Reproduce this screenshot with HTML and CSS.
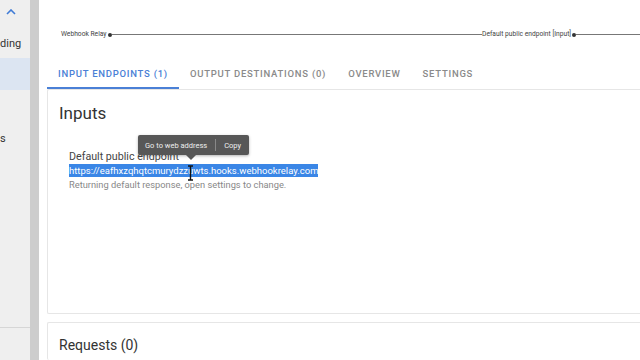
FILE: index.html
```html
<!DOCTYPE html>
<html lang="en">
<head>
    <meta charset="UTF-8">
    <meta name="viewport" content="width=device-width, initial-scale=1.0">
    <title>Webhook Relay - Bucket</title>
    <link rel="stylesheet" href="styles.css">
</head>
<body>
    <div class="sidebar">
        <div class="sideTop">
            <svg class="chevron" width="10" height="6" viewBox="0 0 10 6">
                <path d="M1 5 L5 1 L9 5" fill="none" stroke="#3f7bd6" stroke-width="1.6"/>
            </svg>
        </div>
        <div class="sideItem">ding</div>
        <div class="sideItem active"></div>
        <div class="sideItem low">s</div>
        <div class="sideBottom"></div>
    </div>
    <div class="scrollbar"></div>

    <div class="main">
        <div class="graph">
            <div class="graphLine"></div>
            <div class="node nodeLeft">Webhook Relay <span class="dot"></span></div>
            <div class="node nodeRight">Default public endpoint [Input] <span class="dot"></span></div>
        </div>

        <div class="tabs">
            <div class="tab active">Input endpoints (1)</div>
            <div class="tab">Output destinations (0)</div>
            <div class="tab">Overview</div>
            <div class="tab">Settings</div>
        </div>

        <div class="card inputs">
            <h3>Inputs</h3>
            <div class="endpoint">
                <div class="endpointName">Default public endpoint</div>
                <div class="endpointUrl"><span class="selected">https://eafhxzqhqtcmurydzzuwts.hooks.webhookrelay.com</span></div>
                <div class="endpointNote">Returning default response, open settings to change.</div>

                <div class="popup">
                    <span>Go to web address</span>
                    <span class="sep"></span>
                    <span>Copy</span>
                </div>
                <svg class="cursor" width="7" height="16" viewBox="0 0 7 16">
                    <path d="M1 1 H6 M3.5 1 V15 M1 15 H6" fill="none" stroke="#111" stroke-width="1.4"/>
                </svg>
            </div>
        </div>

        <div class="card requests">
            <h3>Requests (0)</h3>
        </div>
    </div>
</body>
</html>
```

FILE: styles.css
```css
body {
    font-family: Roboto, "Noto Sans", Arial, sans-serif;
    margin: 0;
    width: 640px;
    height: 360px;
    overflow: hidden;
    display: flex;
    background-color: #fff;
}

.sidebar {
    width: 30px;
    flex-shrink: 0;
    background-color: #efefef;
    overflow: hidden;
    display: flex;
    flex-direction: column;
}
.sideTop {
    height: 24px;
    display: flex;
    align-items: center;
    padding-left: 6px;
}
.sideItem {
    height: 34px;
    line-height: 40px;
    font-size: 11px;
    color: #333;
    white-space: nowrap;
}
.sideItem.active {
    height: 32px;
    background-color: #dce5f2;
}
.sideItem.low {
    margin-top: 34px;
    height: 30px;
    line-height: 30px;
}
.sideBottom {
    margin-top: auto;
    height: 32px;
    border-top: 1px solid #d6d6d6;
}

.scrollbar {
    width: 9px;
    flex-shrink: 0;
    background-color: #cdcdcd;
}

.main {
    width: 600px;
    flex-shrink: 0;
    padding-left: 8px;
}

.graph {
    height: 60px;
    position: relative;
}
.graphLine {
    position: absolute;
    left: 64px;
    right: 0;
    top: 34px;
    height: 1px;
    background-color: #777;
}
.node {
    position: absolute;
    top: 30px;
    font-size: 6.7px;
    color: #444;
    background-color: #fff;
    display: flex;
    align-items: center;
    gap: 1px;
    white-space: nowrap;
    line-height: 9px;
}
.nodeLeft {
    left: 14px;
}
.nodeRight {
    left: 435px;
}
.dot {
    width: 4px;
    height: 4px;
    border-radius: 50%;
    background-color: #333;
}

.tabs {
    display: flex;
    height: 29px;
}
.tab {
    padding: 0 11px;
    font-size: 9.5px;
    font-weight: 500;
    letter-spacing: 0.75px;
    text-transform: uppercase;
    color: #8a8a8a;
    display: flex;
    align-items: center;
    box-sizing: border-box;
    border-bottom: 2px solid transparent;
}
.tab.active {
    color: #4a80d6;
    border-bottom-color: #4a80d6;
}

.card {
    border: 1px solid #e6e6e6;
    border-right: none;
    border-radius: 2px 0 0 2px;
    background-color: #fff;
}
.card h3 {
    margin: 0;
    font-weight: 400;
    color: #333;
}
.inputs {
    height: 223px;
    padding-left: 11px;
}
.inputs h3 {
    font-size: 17px;
    padding-top: 13px;
    line-height: 20px;
}
.endpoint {
    position: relative;
    padding-left: 10px;
    padding-top: 27px;
}
.endpointName {
    font-size: 10.7px;
    color: #444;
    line-height: 14px;
}
.endpointUrl {
    font-size: 9.5px;
    line-height: 14px;
}
.selected {
    background-color: #3a86e6;
    color: #fff;
    padding: 1px 0;
}
.endpointNote {
    font-size: 9.3px;
    color: #888;
    line-height: 14px;
}

.popup {
    position: absolute;
    left: 79px;
    top: 12px;
    height: 20px;
    padding: 0 8px 0 7px;
    background-color: #575757;
    border-radius: 2px;
    color: #eee;
    font-size: 7.5px;
    display: flex;
    align-items: center;
    gap: 8px;
    box-shadow: 0 1px 3px rgba(0, 0, 0, 0.3);
}
.popup::after {
    content: "";
    position: absolute;
    left: 48px;
    bottom: -5px;
    border-left: 5px solid transparent;
    border-right: 5px solid transparent;
    border-top: 5px solid #575757;
}
.sep {
    width: 1px;
    height: 12px;
    background-color: #888;
}
.cursor {
    position: absolute;
    left: 128px;
    top: 42px;
}

.requests {
    margin-top: 8px;
    height: 37px;
    border-bottom: none;
    padding-left: 11px;
}
.requests h3 {
    font-size: 14px;
    padding-top: 13px;
    line-height: 18px;
}
```
